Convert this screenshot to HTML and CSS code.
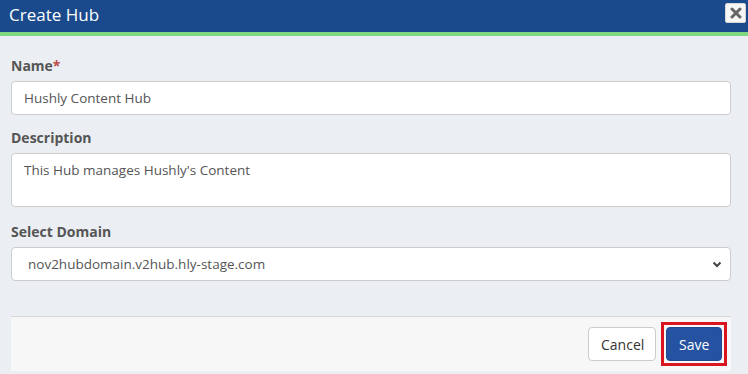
FILE: index.html
```html
<!DOCTYPE html>
<html lang="en">
<head>
    <meta charset="UTF-8">
    <meta name="viewport" content="width=device-width, initial-scale=1.0">
    <title>Create Hub</title>
    <link rel="stylesheet" href="styles.css">
</head>
<body>
    <div class="modal">
        <div class="modal-header">
            <h1 class="modal-title">Create Hub</h1>
            <button class="close-btn" type="button" aria-label="Close">
                <svg width="12" height="12" viewBox="0 0 12 12">
                    <path d="M2 2 L10 10 M10 2 L2 10" stroke="#666" stroke-width="3" stroke-linecap="round"/>
                </svg>
            </button>
        </div>

        <div class="modal-body">
            <label class="field-label">Name<span class="req">*</span></label>
            <div class="field-input">Hushly Content Hub</div>

            <label class="field-label">Description</label>
            <div class="field-input field-textarea">This Hub manages Hushly's Content</div>

            <label class="field-label">Select Domain</label>
            <div class="field-input field-select">
                <span>nov2hubdomain.v2hub.hly-stage.com</span>
                <svg width="10" height="7" viewBox="0 0 10 7">
                    <path d="M1.5 1.5 L5 5 L8.5 1.5" fill="none" stroke="#444" stroke-width="2"/>
                </svg>
            </div>
        </div>

        <div class="modal-footer">
            <button class="btn btn-default" type="button">Cancel</button>
            <span class="highlight">
                <button class="btn btn-primary" type="button">Save</button>
            </span>
        </div>
    </div>
</body>
</html>
```

FILE: styles.css
```css
body {
    margin: 0;
    background: #ebeef3;
    font-family: "Open Sans", "Noto Sans", sans-serif;
    color: #555;
}
.modal {
    width: 748px;
    height: 374px;
    display: flex;
    flex-direction: column;
}
.modal-header {
    height: 32px;
    background: #1a4a8c;
    border-bottom: 4px solid #80d880;
    display: flex;
    align-items: flex-start;
    justify-content: space-between;
    padding: 0 2px 0 9px;
}
.modal-title {
    margin: 0;
    font-size: 17px;
    font-weight: 400;
    color: #fff;
    line-height: 30px;
}
.close-btn {
    margin-top: 3px;
    width: 21px;
    height: 20px;
    padding: 0;
    background: #f6f6f6;
    border: 1px solid #d6d6d6;
    border-radius: 2px;
    display: flex;
    align-items: center;
    justify-content: center;
}
.modal-body {
    padding: 20px 17px 0 11px;
    display: flex;
    flex-direction: column;
}
.field-label {
    font-size: 14px;
    font-weight: 700;
    line-height: 20px;
    margin-bottom: 5px;
}
.req {
    color: #b94a48;
}
.field-input {
    height: 34px;
    box-sizing: border-box;
    background: #fff;
    border: 1px solid #ccc;
    border-radius: 4px;
    padding: 0 12px;
    font-size: 13.5px;
    line-height: 32px;
    margin-bottom: 13px;
}
.field-textarea {
    height: 54px;
    padding-top: 3px;
    line-height: 27px;
    margin-bottom: 15px;
}
.field-select {
    display: flex;
    align-items: center;
    justify-content: space-between;
    padding: 0 8px 0 16px;
    margin-bottom: 0;
}
.modal-footer {
    margin: 35px 17px 0 11px;
    height: 55px;
    box-sizing: border-box;
    background: #f7f7f7;
    border-top: 1px solid #d8d8d8;
    display: flex;
    align-items: center;
    justify-content: flex-end;
    gap: 5px;
    padding: 0 4px 0 0;
}
.btn {
    height: 34px;
    font-family: inherit;
    font-size: 14px;
    border-radius: 4px;
    padding: 0 12px;
}
.btn-default {
    width: 68px;
    background: #fff;
    border: 1px solid #ccc;
    color: #333;
}
.highlight {
    display: flex;
    border: 3px solid #d9161f;
    padding: 2px;
}
.btn-primary {
    width: 56px;
    background: #2553a1;
    border: 1px solid #204a90;
    color: #fff;
}
```
